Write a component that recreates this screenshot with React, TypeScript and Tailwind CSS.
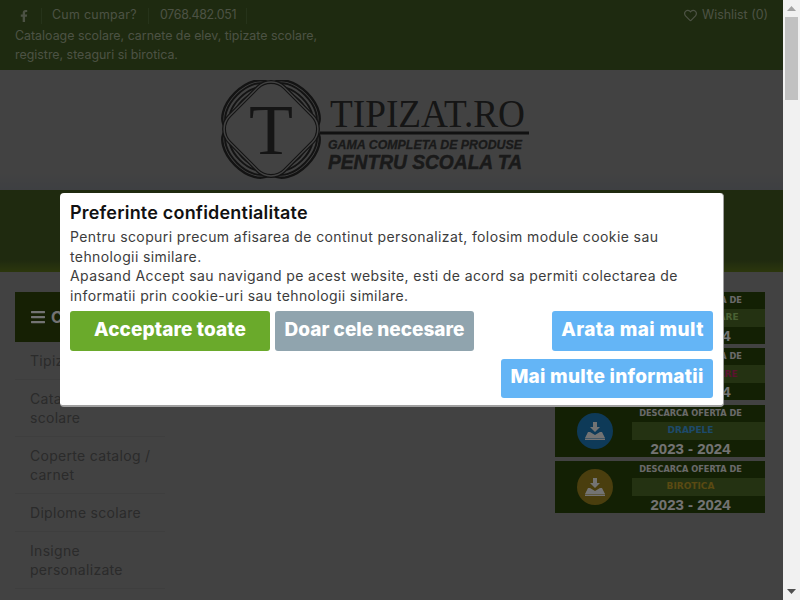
import React from "react";
import { FaFacebookF, FaBars, FaRegHeart } from "react-icons/fa";

const FONT = "font-['Inter','Liberation_Sans',sans-serif]";

function Logo() {
  const ink = "#2b2b2b";
  return (
    <svg width="310" height="100" viewBox="0 0 310 100" className="block">
      <g transform="translate(51 49)" fill="none" stroke={ink}>
        {[45, 135, 225, 315].map((a) => (
          <g key={a} transform={`rotate(${a})`}>
            <ellipse cx="0" cy="-33" rx="31" ry="18" strokeWidth="2.4" />
            <ellipse cx="0" cy="-33" rx="28" ry="15" strokeWidth="2" />
            <ellipse cx="0" cy="-32" rx="24" ry="12" strokeWidth="2" />
            <ellipse cx="0" cy="-31" rx="19" ry="9" strokeWidth="2.4" />
          </g>
        ))}
        <rect x="-40" y="-40" width="80" height="80" rx="20" transform="rotate(45)" fill="#939393" strokeWidth="1.3" />
        <rect x="-37.5" y="-37.5" width="75" height="75" rx="18" transform="rotate(45)" strokeWidth="1.1" />
      </g>
      <text x="51" y="74" textAnchor="middle" fontFamily="Liberation Serif, serif" fontSize="72" fill="#2f2f2f">T</text>
      <text x="110" y="47" fontFamily="Liberation Serif, serif" fontSize="41" fill="#2f2f2f" textLength="195" lengthAdjust="spacingAndGlyphs">TIPIZAT.RO</text>
      <rect x="100" y="51.5" width="209" height="3" fill="#262626" />
      <text x="108" y="69" fontFamily="Liberation Sans, sans-serif" fontWeight="700" fontStyle="italic" fontSize="12.5" fill="#3a3a3a" stroke="#3a3a3a" strokeWidth="0.3" textLength="194" lengthAdjust="spacingAndGlyphs">GAMA COMPLETA DE PRODUSE</text>
      <text x="108" y="89" fontFamily="Liberation Sans, sans-serif" fontWeight="700" fontStyle="italic" fontSize="20" fill="#3a3a3a" stroke="#3a3a3a" strokeWidth="0.5" textLength="194" lengthAdjust="spacingAndGlyphs">PENTRU SCOALA TA</text>
    </svg>
  );
}

function DownloadGlyph() {
  return (
    <svg width="20" height="18" viewBox="0 0 20 18" fill="#ffffff">
      <path d="M8 0h4v5h3l-5 5-5-5h3z" />
      <path d="M0 16l3-6h2l5 3 5-3h2l3 6z" />
      <rect x="0" y="16.5" width="20" height="1.5" />
    </svg>
  );
}

function Banner({ word, circle, wordColor }: { word: string; circle: string; wordColor: string }) {
  return (
    <div className="flex h-[52px] w-[210px] items-center bg-[#2c470b]">
      <div className="flex w-[77px] shrink-0 justify-center pr-[6px] pl-[9px]">
        <div className={`flex h-[36px] w-[36px] items-center justify-center rounded-full ${circle}`}>
          <DownloadGlyph />
        </div>
      </div>
      <div className="flex flex-1 flex-col font-bold">
        <div className="pr-[16px] text-center font-['DejaVu_Sans',sans-serif] text-[8.2px] leading-[17px] text-[#ebebeb]">DESCARCA OFERTA DE</div>
        <div className={`flex h-[18px] w-full items-center justify-center bg-[#506f28] pr-[16px] font-['DejaVu_Sans',sans-serif] text-[9px] ${wordColor}`}>{word}</div>
        <div className="pr-[16px] text-center font-['Liberation_Sans',sans-serif] text-[15px] leading-[17px] text-white">2023 - 2024</div>
      </div>
    </div>
  );
}

function Scrollbar() {
  return (
    <div className="flex h-[600px] w-[17px] shrink-0 flex-col items-center bg-[#f1f1f1]">
      <div className="flex h-[17px] items-center justify-center">
        <svg width="9" height="5" viewBox="0 0 9 5" fill="#a3a3a3"><path d="M4.5 0L9 5H0z" /></svg>
      </div>
      <div className="h-[83px] w-[13px] bg-[#c1c1c1]" />
      <div className="flex-1" />
      <div className="flex h-[17px] items-center justify-center">
        <svg width="9" height="5" viewBox="0 0 9 5" fill="#505050"><path d="M0 0h9L4.5 5z" /></svg>
      </div>
    </div>
  );
}

const menu = ["Tipizate", "Cataloage\nscolare", "Coperte catalog /\ncarnet", "Diplome scolare", "Insigne\npersonalizate"];

export default function App() {
  return (
    <div className={`${FONT} flex h-[600px] overflow-hidden`}>
      <div className="relative h-[600px] w-[783px] overflow-hidden bg-[#939393]">
        <div className="h-[70px] bg-[#435d24] px-[15px] text-[12.4px] text-[#a9b697]">
          <div className="flex justify-between">
            <div>
              <div className="flex h-[25.5px] items-center pt-[6px]">
                <div className="flex h-[16px] w-[27px] items-center border-r border-[#56723a] pl-[3px] text-[12px]">
                  <FaFacebookF />
                </div>
                <div className="flex h-[16px] w-[107px] items-center border-r border-[#56723a] pl-[10px] tracking-[0.3px]">Cum cumpar?</div>
                <div className="flex h-[16px] w-[98px] items-center border-r border-[#56723a] pl-[11px] tracking-[-0.3px]">0768.482.051</div>
              </div>
              <div className="w-[320px] leading-[19.5px]">Cataloage scolare, carnete de elev, tipizate scolare, registre, steaguri si birotica.</div>
            </div>
            <div className="flex h-[31px] items-center gap-[5px]">
              <FaRegHeart className="text-[13px]" />
              <span>Wishlist (0)</span>
            </div>
          </div>
        </div>

        <div className="flex h-[120px] justify-center bg-gradient-to-b from-[#939393] from-85% to-[#8a8d92] pr-[33px] pt-[10px]">
          <Logo />
        </div>

        <div className="h-[82px] bg-gradient-to-b from-[#455d23] from-85% to-[#627a1c]" />

        <div className="flex justify-between pl-[15px] pr-[18px] pt-[20px]">
          <div className="w-[150px]">
            <div className="flex h-[50px] items-center gap-[5px] bg-[#31470b] px-[15px] text-[16px] font-bold text-white">
              <FaBars />
              <span>Categorii</span>
            </div>
            {menu.map((m) => (
              <div key={m} className="whitespace-pre-line border-b border-[#8a8a8a] pl-[15px] py-[9px] text-[14px] leading-[19px] tracking-[0.3px] text-[#5f5f5f]">
                {m}
              </div>
            ))}
          </div>
          <div className="flex flex-col gap-[4.33px]">
            <Banner word="CARNETE SCOLARE" circle="bg-[#2180c4]" wordColor="text-[#a4d874]" />
            <Banner word="TIPIZATE SCOLARE" circle="bg-[#a03060]" wordColor="text-[#c92a6a]" />
            <Banner word="DRAPELE" circle="bg-[#2180c4]" wordColor="text-[#42a5eb]" />
            <Banner word="BIROTICA" circle="bg-[#a48a1f]" wordColor="text-[#c8a528]" />
          </div>
        </div>

        <div className="absolute inset-0 bg-black/55">
          <div className="ml-[60px] mt-[193px] h-[214px] w-[664px] rounded-[4px] border-b-2 border-r border-[#a0a0a0] bg-white px-[10px] pt-[9px]">
            <h2 className="text-[18px] font-semibold leading-[22px] tracking-[0.2px] text-[#111]">Preferinte confidentialitate</h2>
            <p className="mt-[3px] text-[14px] leading-[19.5px] tracking-[0.4px] text-[#3c3c3c]">
              Pentru scopuri precum afisarea de continut personalizat, folosim module cookie sau tehnologii similare.
              <br />
              Apasand Accept sau navigand pe acest website, esti de acord sa permiti colectarea de informatii prin cookie-uri sau tehnologii similare.
            </p>
            <div className="mt-[6px] flex items-start justify-between">
              <div className="flex gap-[5px]">
                <button className="h-[40px] w-[200px] rounded-[3px] bg-[#6aaa2b] pb-[2px] text-[19px] font-extrabold tracking-[0.1px] text-white">Acceptare toate</button>
                <button className="h-[40px] w-[199px] rounded-[3px] bg-[#90a4ae] pb-[2px] text-[19px] font-extrabold text-white">Doar cele necesare</button>
              </div>
              <div className="flex flex-col items-end gap-[8px]">
                <button className="h-[40px] w-[161px] rounded-[3px] bg-[#64b5f6] pb-[2px] text-[19px] font-extrabold tracking-[0.4px] text-white">Arata mai mult</button>
                <button className="h-[39px] w-[212px] rounded-[3px] bg-[#64b5f6] pb-[2px] text-[19px] font-extrabold tracking-[0.25px] text-white">Mai multe informatii</button>
              </div>
            </div>
          </div>
        </div>
      </div>
      <Scrollbar />
    </div>
  );
}
